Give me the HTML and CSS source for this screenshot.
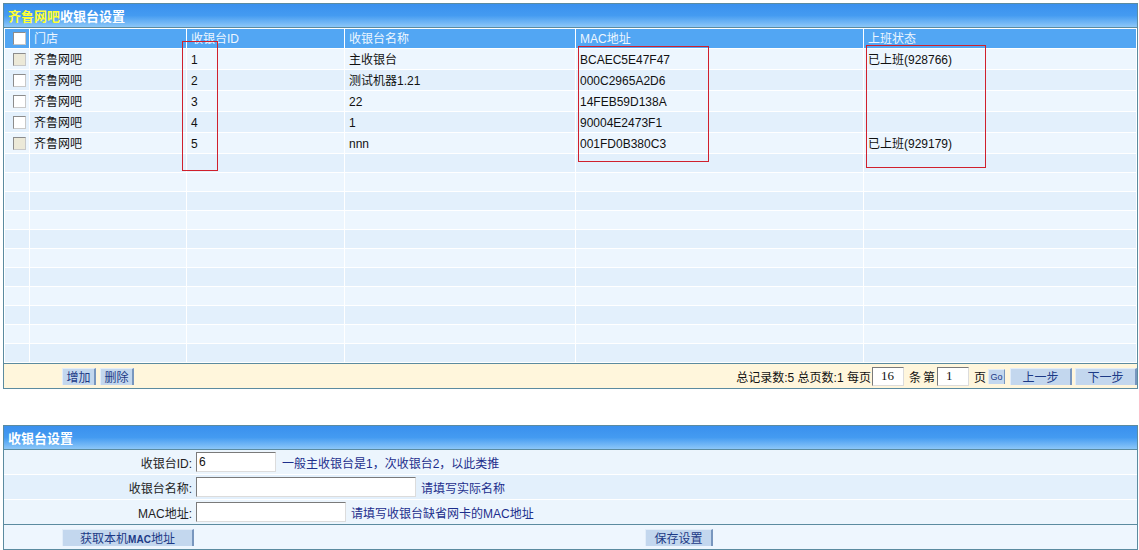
FILE: index.html
```html
<!DOCTYPE html>
<html lang="zh-CN">
<head>
<meta charset="utf-8">
<title>收银台设置</title>
<link rel="stylesheet" href="styles.css">
</head>
<body>
<div class="page">
  <div class="panel list-panel">
    <div class="panel-title"><span class="shop">齐鲁网吧</span>收银台设置</div>
    <table class="grid">
      <colgroup>
        <col class="c-check"><col class="c-shop"><col class="c-id"><col class="c-name"><col class="c-mac"><col class="c-state">
      </colgroup>
      <thead>
        <tr><th class="check"><span class="cb"></span></th><th>门店</th><th>收银台ID</th><th>收银台名称</th><th>MAC地址</th><th>上班状态</th></tr>
      </thead>
      <tbody>
        <tr class="odd"><td class="check"><span class="cb cb-dis"></span></td><td>齐鲁网吧</td><td>1</td><td>主收银台</td><td>BCAEC5E47F47</td><td>已上班(928766)</td></tr>
        <tr class="even"><td class="check"><span class="cb"></span></td><td>齐鲁网吧</td><td>2</td><td>测试机器1.21</td><td>000C2965A2D6</td><td></td></tr>
        <tr class="odd"><td class="check"><span class="cb"></span></td><td>齐鲁网吧</td><td>3</td><td>22</td><td>14FEB59D138A</td><td></td></tr>
        <tr class="even"><td class="check"><span class="cb"></span></td><td>齐鲁网吧</td><td>4</td><td>1</td><td>90004E2473F1</td><td></td></tr>
        <tr class="odd"><td class="check"><span class="cb cb-dis"></span></td><td>齐鲁网吧</td><td>5</td><td>nnn</td><td>001FD0B380C3</td><td>已上班(929179)</td></tr>
        <tr class="even empty"><td></td><td></td><td></td><td></td><td></td><td></td></tr>
        <tr class="odd empty"><td></td><td></td><td></td><td></td><td></td><td></td></tr>
        <tr class="even empty"><td></td><td></td><td></td><td></td><td></td><td></td></tr>
        <tr class="odd empty"><td></td><td></td><td></td><td></td><td></td><td></td></tr>
        <tr class="even empty"><td></td><td></td><td></td><td></td><td></td><td></td></tr>
        <tr class="odd empty"><td></td><td></td><td></td><td></td><td></td><td></td></tr>
        <tr class="even empty"><td></td><td></td><td></td><td></td><td></td><td></td></tr>
        <tr class="odd empty"><td></td><td></td><td></td><td></td><td></td><td></td></tr>
        <tr class="even empty"><td></td><td></td><td></td><td></td><td></td><td></td></tr>
        <tr class="odd empty"><td></td><td></td><td></td><td></td><td></td><td></td></tr>
        <tr class="even empty"><td></td><td></td><td></td><td></td><td></td><td></td></tr>
      </tbody>
    </table>
    <div class="list-foot">
      <div class="foot-left">
        <button class="btn btn-small">增加</button>
        <button class="btn btn-small">删除</button>
      </div>
      <div class="pager">
        <span>总记录数:5 总页数:1 每页</span>
        <input class="page-input" value="16">
        <span class="pg-txt">条</span>
        <span class="pg-txt2">第</span>
        <input class="page-input" value="1">
        <span class="pg-txt">页</span>
        <button class="btn btn-go">Go</button>
        <button class="btn btn-step">上一步</button>
        <button class="btn btn-step">下一步</button>
      </div>
    </div>
    <div class="mark mark-id"></div>
    <div class="mark mark-mac"></div>
    <div class="mark mark-state"></div>
  </div>

  <div class="panel form-panel">
    <div class="panel-title">收银台设置</div>
    <div class="form-row odd">
      <label class="form-label">收银台ID:</label>
      <input class="field field-id" value="6">
      <span class="hint hint-id">一般主收银台是1，次收银台2，以此类推</span>
    </div>
    <div class="form-row even">
      <label class="form-label">收银台名称:</label>
      <input class="field field-name" value="">
      <span class="hint">请填写实际名称</span>
    </div>
    <div class="form-row odd last-row">
      <label class="form-label">MAC地址:</label>
      <input class="field field-mac" value="">
      <span class="hint">请填写收银台缺省网卡的MAC地址</span>
    </div>
    <div class="form-actions">
      <button class="btn btn-mac">获取本机<b class="mac">MAC</b>地址</button>
      <button class="btn btn-save">保存设置</button>
    </div>
  </div>
</div>
</body>
</html>
```

FILE: styles.css
```css
* { box-sizing: border-box; }

body {
  margin: 0;
  background: #ffffff;
  font-family: "Liberation Sans", "Noto Sans CJK SC", sans-serif;
  font-size: 12px;
  color: #111111;
}

.page {
  padding: 3px 0 0 3px;
  width: 1139px;
}

.panel {
  position: relative;
  width: 1135px;
  border: 1px solid #5b8ba0;
  background: #ffffff;
}

.panel-title {
  height: 24px;
  border-bottom: 1px solid #5b8ba0;
  background: linear-gradient(#3a90ee 0%, #449bf1 50%, #8cc7f8 100%);
  color: #ffffff;
  font-weight: bold;
  font-size: 13px;
  line-height: 23px;
  padding-left: 4px;
  font-family: "Noto Sans CJK SC", sans-serif;
}

.shop { color: #ffff33; }

/* grid */
.grid {
  border-collapse: separate;
  border-spacing: 1px;
  table-layout: fixed;
  width: 1133px;
  background: #ffffff;
}
.c-check { width: 24px; }
.c-shop { width: 156px; }
.c-id { width: 157px; }
.c-name { width: 230px; }
.c-mac { width: 287px; }
.c-state { width: 272px; }

.grid th {
  height: 19px;
  padding: 0 4px;
  background: #52a6f3;
  color: #edf6ff;
  font-weight: normal;
  text-align: left;
  line-height: 16px;
  white-space: nowrap;
}
.grid td {
  height: 20px;
  padding: 1px 4px 0;
  line-height: 16px;
  white-space: nowrap;
}
.grid tr.empty td { height: 18px; padding: 0; }
.grid tr.odd td { background: #edf6fe; }
.grid tr.even td { background: #e3f0fc; }
.grid .check { padding: 0; }

.cb {
  display: block;
  width: 13px;
  height: 13px;
  margin-left: 8px;
  border: 1px solid #8c8c8c;
  border-right-color: #c8c8c8;
  border-bottom-color: #c8c8c8;
  background: #ffffff;
}
.cb-dis { background: #ece9d8; }

/* footer */
.list-foot {
  height: 25px;
  border-top: 1px solid #5b8ba0;
  background: #fff6dc;
  display: flex;
  align-items: center;
  justify-content: space-between;
  padding: 0 0 0 58px;
}
.foot-left { display: flex; gap: 4px; }

.btn {
  height: 17px;
  padding: 0;
  border: none;
  border-left: 1px solid #e2edf9;
  border-top: 1px solid #e2edf9;
  border-right: 2px solid #7896be;
  background: #c3d7ee;
  color: #1d3a86;
  font-family: "Noto Sans CJK SC", sans-serif;
  font-size: 12px;
  line-height: 15px;
  text-align: center;
}
.btn-small { width: 34px; }

.pager {
  display: flex;
  align-items: center;
  white-space: nowrap;
}
.page-input {
  width: 32px;
  height: 19px;
  margin-left: 1px;
  padding: 0 0 0 8px;
  border: 1px solid #7a7a7a;
  border-right-color: #dcdcdc;
  border-bottom-color: #dcdcdc;
  background: #ffffff;
  font-family: "Liberation Serif", serif;
  font-size: 13px;
  color: #111;
}
.pg-txt { margin-left: 5px; }
.pg-txt2 { margin-left: 2px; margin-right: 1px; }
.btn-go {
  width: 17px;
  height: 15px;
  margin-left: 2px;
  border-right-width: 1px;
  font-family: "Liberation Sans", sans-serif;
  font-size: 9px;
  line-height: 12px;
}
.btn-step { width: 62px; margin-left: 5px; }
.btn-step + .btn-step { margin-left: 3px; }

/* highlight boxes */
.mark {
  position: absolute;
  border: 1px solid #d0202c;
  pointer-events: none;
}
.mark-id { left: 178px; top: 37px; width: 36px; height: 130px; }
.mark-mac { left: 574px; top: 42px; width: 131px; height: 116px; }
.mark-state { left: 862px; top: 41px; width: 120px; height: 123px; }

/* form panel */
.form-panel { margin-top: 36px; }

.form-row {
  display: flex;
  align-items: center;
  height: 25px;
  border-bottom: 1px solid #ffffff;
}
.form-row.odd { background: #ecf5fd; }
.form-row.even { background: #e3f0fc; }
.form-row.last-row { border-bottom: none; height: 24px; }

.form-label {
  width: 188px;
  text-align: right;
  color: #222222;
}
.field {
  height: 20px;
  margin-left: 4px;
  padding: 0 0 0 2px;
  border: 1px solid #7a7a7a;
  border-right-color: #dcdcdc;
  border-bottom-color: #dcdcdc;
  background: #ffffff;
  font-family: "Liberation Sans", sans-serif;
  font-size: 12px;
  color: #111;
}
.field-id { width: 80px; }
.field-name { width: 220px; }
.field-mac { width: 150px; }

.hint {
  margin-left: 5px;
  color: #1c2e8c;
}
.hint-id { margin-left: 6px; }

.form-actions {
  display: flex;
  align-items: center;
  height: 25px;
  border-top: 1px solid #5b8ba0;
  background: #eef6fe;
  padding-left: 58px;
}
.btn-mac { width: 132px; }
.mac { font-family: "Liberation Sans", sans-serif; font-size: 10px; font-weight: bold; }
.btn-save { width: 68px; margin-left: 451px; }
```
